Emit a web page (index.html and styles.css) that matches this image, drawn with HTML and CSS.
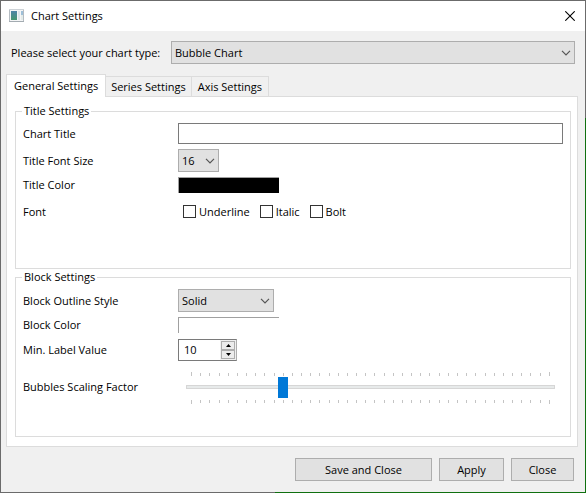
FILE: index.html
```html
<!DOCTYPE html>
<html lang="en">
<head>
<meta charset="utf-8">
<title>Chart Settings</title>
<link rel="stylesheet" href="styles.css">
</head>
<body>
<div class="window">
  <header class="titlebar">
    <svg class="app-icon" width="16" height="14" viewBox="0 0 16 14" aria-hidden="true">
      <defs><linearGradient id="g" x1="0" y1="0" x2="0" y2="1"><stop offset="0" stop-color="#4f84a8"/><stop offset="1" stop-color="#46966f"/></linearGradient></defs>
      <rect x="0.5" y="0.5" width="14" height="12" fill="#f4f5f6" stroke="#b5bcc2"/>
      <path d="M0 0.5h15" stroke="#cdd2d6"/>
      <rect x="2" y="2" width="6" height="9" fill="url(#g)"/>
      <rect x="9" y="2" width="2" height="9" fill="#dfe5ea"/>
      <rect x="12" y="2" width="2" height="4" fill="#9dbfd8"/>
      <rect x="12" y="6" width="2" height="5" fill="#e3ebe8"/>
      <path d="M0 12.5h15" stroke="#a3abb1"/>
    </svg>
    <h1 class="caption">Chart Settings</h1>
    <button class="window-close" type="button" aria-label="Close window">
      <svg width="10" height="10" viewBox="0 0 10 10"><path d="M0.3 0.3L9.7 9.7M9.7 0.3L0.3 9.7" stroke="#000" stroke-width="1.1"/></svg>
    </button>
  </header>
  <form class="content">
    <div class="type-row">
      <label class="type-label" for="type">Please select your chart type:</label>
      <span class="combo combo-wide">
        <select id="type"><option>Bubble Chart</option></select>
        <svg class="chevron" width="10" height="6" viewBox="0 0 10 6"><path d="M1 0.8L5 4.8L9 0.8" fill="none" stroke="#555" stroke-width="1.2"/></svg>
      </span>
    </div>
    <div class="tabs" role="tablist">
      <button class="tab tab-active" type="button" role="tab" aria-selected="true">General Settings</button>
      <button class="tab" type="button" role="tab" aria-selected="false">Series Settings</button>
      <button class="tab tab-last" type="button" role="tab" aria-selected="false">Axis Settings</button>
    </div>
    <div class="pane" role="tabpanel">
      <fieldset class="group group-title">
        <legend>Title Settings</legend>
        <div class="rows rows-title">
          <label for="title">Chart Title</label>
          <input class="text" id="title" type="text">
          <label for="size">Title Font Size</label>
          <span class="combo combo-size">
            <select id="size"><option>16</option></select>
            <svg class="chevron" width="10" height="6" viewBox="0 0 10 6"><path d="M1 0.8L5 4.8L9 0.8" fill="none" stroke="#555" stroke-width="1.2"/></svg>
          </span>
          <label for="title-color">Title Color</label>
          <button class="swatch swatch-black" id="title-color" type="button"></button>
          <span>Font</span>
          <div class="checks">
            <label class="check"><input type="checkbox">Underline</label>
            <label class="check"><input type="checkbox">Italic</label>
            <label class="check"><input type="checkbox">Bolt</label>
          </div>
        </div>
      </fieldset>
      <fieldset class="group group-block">
        <legend>Block Settings</legend>
        <div class="rows rows-block">
          <label for="outline">Block Outline Style</label>
          <span class="combo combo-outline">
            <select id="outline"><option>Solid</option></select>
            <svg class="chevron" width="10" height="6" viewBox="0 0 10 6"><path d="M1 0.8L5 4.8L9 0.8" fill="none" stroke="#555" stroke-width="1.2"/></svg>
          </span>
          <label for="block-color">Block Color</label>
          <button class="swatch swatch-white" id="block-color" type="button"></button>
          <label for="min">Min. Label Value</label>
          <div class="spin">
            <input id="min" type="number" value="10">
            <div class="spin-buttons">
              <button type="button" aria-label="Increase"><svg width="5" height="3" viewBox="0 0 5 3"><path d="M0 3L2.5 0L5 3z"/></svg></button>
              <button type="button" aria-label="Decrease"><svg width="5" height="3" viewBox="0 0 5 3"><path d="M0 0L2.5 3L5 0z"/></svg></button>
            </div>
          </div>
          <label for="scale">Bubbles Scaling Factor</label>
          <div class="slider">
            <div class="ticks ticks-top"><i></i><i></i><i></i><i></i><i></i><i></i><i></i><i></i><i></i><i></i><i></i><i></i><i></i><i></i><i></i><i></i><i></i><i></i><i></i><i></i><i></i><i></i><i></i><i></i><i></i><i></i><i></i><i></i><i></i><i></i><i></i><i></i><i></i><i></i><i></i><i></i><i></i><i></i><i></i><i></i></div>
            <input id="scale" type="range" min="0" max="39" value="10">
            <div class="ticks"><i></i><i></i><i></i><i></i><i></i><i></i><i></i><i></i><i></i><i></i><i></i><i></i><i></i><i></i><i></i><i></i><i></i><i></i><i></i><i></i><i></i><i></i><i></i><i></i><i></i><i></i><i></i><i></i><i></i><i></i><i></i><i></i><i></i><i></i><i></i><i></i><i></i><i></i><i></i><i></i></div>
          </div>
        </div>
      </fieldset>
    </div>
    <footer class="actions">
      <button class="button button-save" type="button">Save and Close</button>
      <button class="button button-apply" type="button">Apply</button>
      <button class="button button-close" type="button">Close</button>
    </footer>
  </form>
</div>
</body>
</html>
```
FILE: styles.css
```css
* { box-sizing: border-box; }

body {
  margin: 0;
  color: #000;
  font: 11px/16px "Segoe UI", "Open Sans", sans-serif;
}

button, input, select {
  margin: 0;
  padding: 0;
  border: 0;
  border-radius: 0;
  color: inherit;
  font: inherit;
}

.window {
  display: flex;
  flex-direction: column;
  min-height: 100vh;
  padding: 1px;
  background:
    linear-gradient(#6b6b6b, #6b6b6b) left / 1px 100% no-repeat,
    linear-gradient(#6b6b6b, #6b6b6b) top / 100% 1px no-repeat,
    linear-gradient(#6b6b6b 24%, #107010 24%) right / 1px 100% no-repeat,
    linear-gradient(90deg, #6b6b6b 47%, #107010 47%) bottom / 100% 1px no-repeat;
}

.titlebar {
  display: flex;
  align-items: center;
  height: 30px;
  padding: 0 10px 0 8px;
  background: #fff;
}
.caption {
  flex: 1;
  margin: 0 0 0 6px;
  font-size: 11px;
  font-weight: 400;
}
.window-close {
  display: flex;
  background: none;
}

.content {
  display: flex;
  flex: 1;
  flex-direction: column;
  padding: 10px 7px 11px 5px;
  background: #f0f0f0;
}

.type-row {
  display: flex;
  align-items: center;
  padding: 0 3px 0 5px;
}
.type-label { width: 160px; white-space: nowrap; }

.combo {
  position: relative;
  display: block;
  height: 23px;
}
.combo select {
  appearance: none;
  width: 100%;
  height: 100%;
  padding: 0 20px 0 3px;
  border: 1px solid #adadad;
  background: #e1e1e1;
}
.combo-wide { flex: 1; }
.combo-size { width: 41px; }
.combo-outline { width: 96px; }
.chevron {
  position: absolute;
  top: 9px;
  right: 4px;
  pointer-events: none;
}

.tabs {
  display: flex;
  align-items: flex-end;
  margin-top: 10px;
}
.tab {
  height: 20px;
  padding: 0 5px;
  border: 1px solid #dcdcdc;
  border-width: 1px 1px 0 0;
  background: #f0f0f0;
  white-space: nowrap;
}
.tab-last { padding: 0 6px; }
.tab-active {
  z-index: 1;
  height: 23px;
  margin-bottom: -1px;
  padding: 0 7px;
  border-width: 1px 1px 0 1px;
  background: #fff;
}

.pane {
  display: flex;
  flex: 1;
  flex-direction: column;
  padding: 6px 6px 9px 8px;
  border: 1px solid #dcdcdc;
  background: #fff;
}

.group {
  min-width: 0;
  margin: 0;
  padding: 4px 7px 0;
  border: 1px solid #dcdcdc;
}
.group legend {
  margin-left: -1px;
  padding: 0 2px;
}
.group-title { flex: 1; }
.group-block { padding-bottom: 29px; }

.rows {
  display: grid;
  grid-template-columns: 155px 1fr;
  align-items: center;
  row-gap: 5px;
}
.rows-title { grid-template-rows: 21px 23px 16px 27px; }
.rows-block { grid-template-rows: 23px 16px 24px 40px; }

.text {
  width: 100%;
  height: 21px;
  padding: 0 4px;
  border: 1px solid #7a7a7a;
  background: #fff;
}

.swatch {
  width: 101px;
  height: 16px;
  border: 1px solid #a0a0a0;
  border-width: 1px 0 0 1px;
}
.swatch-black { background: #000; }
.swatch-white { background: #fff; }

.checks {
  display: flex;
  gap: 10px;
  padding-left: 5px;
}
.check {
  display: flex;
  align-items: center;
  gap: 3px;
}
.check input {
  appearance: none;
  width: 13px;
  height: 13px;
  border: 1px solid #333;
  background: #fff;
}

.spin {
  display: flex;
  width: 59px;
  height: 22px;
  border: 1px solid #7a7a7a;
  border-right-color: #adadad;
  background: #fff;
}
.spin input {
  appearance: textfield;
  flex: 1;
  min-width: 0;
  padding-left: 5px;
  background: none;
}
.spin-buttons {
  display: flex;
  flex-direction: column;
  width: 16px;
  padding: 1px;
  background: #f0f0f0;
}
.spin-buttons button {
  display: flex;
  flex: 1;
  align-items: center;
  justify-content: center;
  border: 1px solid #adadad;
  background: #ececec;
}

.slider {
  padding: 0 8px;
}
.slider input {
  appearance: none;
  display: block;
  width: 100%;
  height: 21px;
  background: linear-gradient(#e7eaea, #e7eaea) center / calc(100% - 2px) 2px no-repeat,
    linear-gradient(#d6d6d6, #d6d6d6) center / 100% 4px no-repeat;
}
.slider input::-webkit-slider-thumb {
  appearance: none;
  width: 10px;
  height: 21px;
  background: #0078d7;
}
.ticks {
  display: flex;
  justify-content: space-between;
  height: 6px;
  padding: 2px 5px 0;
}
.ticks i {
  width: 1px;
  height: 3px;
  background: #c4c4c4;
}
.ticks i:first-child, .ticks i:last-child { height: 4px; }
.ticks-top {
  align-items: flex-end;
  padding: 0 5px 1px;
}

.actions {
  display: flex;
  justify-content: flex-end;
  gap: 7px;
  padding: 11px 4px 0 0;
}
.button {
  height: 23px;
  border: 1px solid #adadad;
  background: #e1e1e1;
}
.button-save { width: 137px; }
.button-apply { width: 65px; }
.button-close { width: 63px; }
```
